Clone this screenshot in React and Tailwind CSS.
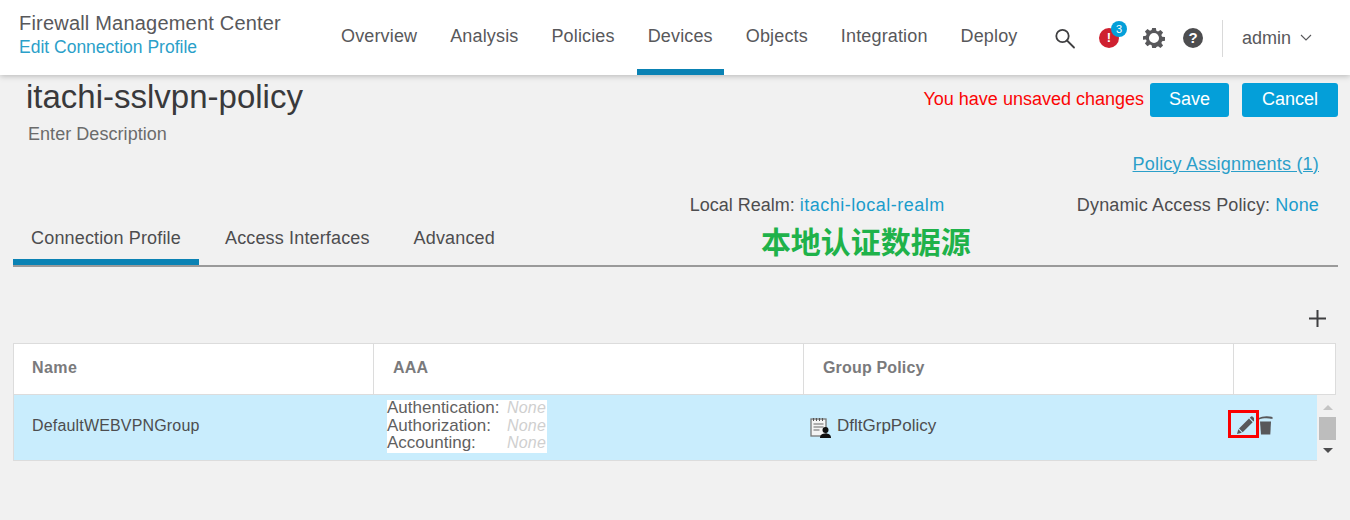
import React from "react";

const F = "[font-family:'Liberation_Sans',Arial,sans-serif]";

function NavItem({ label, active }) {
  return (
    <div className={`h-[75px] px-[11px] flex items-center border-b-[6px] ${active ? "border-[#0a82b4]" : "border-transparent"} `}>
      <span className="text-[18px] tracking-[0.15px] text-[#58585b] pt-[4.5px]">{label}</span>
    </div>
  );
}

export default function App() {
  return (
    <div className={`${F} w-[1350px] h-[520px] overflow-hidden bg-[#f1f1f1] text-[#4d4d4f]`}>
      <header className="h-[75px] bg-white shadow-[0_1px_6px_rgba(0,0,0,0.25)] flex items-start relative z-10">
        <div className="w-[326px] pl-[19px] pt-[10px] shrink-0">
          <div className="text-[20px] leading-[26px] text-[#58585b] tracking-[0.2px]">Firewall Management Center</div>
          <div className="text-[17.5px] leading-[22px] text-[#2b9fc9]">Edit Connection Profile</div>
        </div>
        <nav className="flex gap-[11px] w-[710px] shrink-0 pl-[4px]">
          <NavItem label="Overview" />
          <NavItem label="Analysis" />
          <NavItem label="Policies" />
          <NavItem label="Devices" active />
          <NavItem label="Objects" />
          <NavItem label="Integration" />
          <NavItem label="Deploy" />
        </nav>
        <div className="flex items-center h-[75px] pt-[1px]">
          <svg width="22" height="22" viewBox="0 0 22 22" fill="none" stroke="#3f3f41" strokeWidth="1.8" className="ml-[18px]">
            <circle cx="8.5" cy="9" r="6.2" />
            <path d="M13 13.5l7 7" strokeLinecap="round" />
          </svg>
          <div className="relative ml-[23px] w-[20px] h-[20px] rounded-full bg-[#cf2030] flex items-center justify-center text-white text-[13px] font-bold">
            !
            <span className="absolute -top-[7px] left-[12px] w-[16px] h-[16px] rounded-full bg-[#049fd9] text-white text-[11px] leading-[16px] text-center font-normal">3</span>
          </div>
          <svg width="22" height="22" viewBox="0 0 24 24" className="ml-[24px]" fill="#58585b">
            <path fillRule="evenodd" d="M10 1h4l.6 3.2 1.8.8 2.7-1.8 2.8 2.8-1.9 2.7.8 1.8 3.2.5v4l-3.2.6-.8 1.8 1.9 2.7-2.8 2.8-2.7-1.9-1.8.8L14 23h-4l-.6-3.2-1.8-.8-2.7 1.9-2.8-2.8 1.9-2.7-.8-1.8L0 14v-4l3.2-.5.8-1.8L2.1 5l2.8-2.8L7.6 4l1.8-.8zM12 6.500a5.500 5.500 0 100 11 5.500 5.500 0 000-11z" />
          </svg>
          <div className="ml-[18px] w-[20px] h-[20px] rounded-full bg-[#4d4d4f] flex items-center justify-center text-white text-[15px] font-bold">?</div>
          <div className="ml-[19px] w-px h-[37px] bg-[#d9d9d9]" />
          <span className="ml-[19px] text-[18px] text-[#58585b]">admin</span>
          <svg width="12" height="8" viewBox="0 0 12 8" fill="none" stroke="#58585b" strokeWidth="1.1" className="ml-[9px]">
            <path d="M1 1l5 5 5-5" />
          </svg>
        </div>
      </header>

      <main>
        <div className="flex justify-between items-start pl-[26px] pr-[12px]">
          <div>
            <h1 className="text-[33px] leading-[44px] text-[#39393b]">itachi-sslvpn-policy</h1>
            <div className="text-[18px] leading-[21px] mt-[4.5px] pl-[2px] text-[#6b6b6b] tracking-[0.05px]">Enter Description</div>
          </div>
          <div className="flex items-center pt-[8px]">
            <span className="text-[#fb0505] text-[18px] mr-[6px] -mt-[2px]">You have unsaved changes</span>
            <button className="w-[79px] h-[34px] rounded-[3px] bg-[#049fd9] text-white text-[18px] pb-[2px]">Save</button>
            <button className="w-[96px] h-[34px] rounded-[3px] bg-[#049fd9] text-white text-[18px] pb-[2px] ml-[13px]">Cancel</button>
          </div>
        </div>

        <div className="flex justify-end pr-[31px] mt-[9px]">
          <a className="text-[18px] leading-[21px] text-[#2b9fc9] underline tracking-[0.2px]">Policy Assignments (1)</a>
        </div>

        <div className="flex justify-end pr-[31px] mt-[20px] text-[18px] leading-[21px]">
          <span>Local Realm: <span className="text-[#1b9ccc] tracking-[0.5px]">itachi-local-realm</span></span>
          <span className="ml-[132px] tracking-[0.15px]">Dynamic Access Policy: <span className="text-[#1b9ccc]">None</span></span>
        </div>

        <div className="ml-[13px] mr-[12px] mt-[1px] h-[50px] border-b-[2px] border-[#9a9a9a] flex items-stretch relative tracking-[0.15px]">
          <div className="w-[186px] flex items-center justify-center border-b-[6px] border-[#0a82b4] text-[18px] pt-[2px]">Connection Profile</div>
          <div className="ml-[26px] flex items-center text-[18px] pb-[4px]">Access Interfaces</div>
          <div className="ml-[44px] flex items-center text-[18px] pb-[4px]">Advanced</div>
          <div className="ml-[266px] flex items-center text-[30px] font-bold text-[#1fb24a] [font-family:'Noto_Sans_CJK_SC',sans-serif] tracking-[0px]">本地认证数据源</div>
        </div>

        <div className="flex justify-end pr-[23px] mt-[42px] mb-[15px]">
          <svg width="19" height="19" viewBox="0 0 19 19" stroke="#3f3f41" strokeWidth="2"><path d="M9.5 1v17M1 9.500h17" /></svg>
        </div>

        <div className="ml-[13px] w-[1323px] h-[52px] bg-white border border-[#dcdcdc] grid grid-cols-[360px_430px_430px_1fr] text-[16px] font-bold text-[#7a7a7c] tracking-[0.17px]">
          <div className="flex items-center pl-[18px] pb-[2px] border-r border-[#dcdcdc] tracking-[0.4px]">Name</div>
          <div className="flex items-center pl-[19px] pb-[2px] border-r border-[#dcdcdc]">AAA</div>
          <div className="flex items-center pl-[19px] pb-[2px] border-r border-[#dcdcdc]">Group Policy</div>
          <div />
        </div>

        <div className="ml-[13px] w-[1323px] h-[67px] flex">
          <div className="w-[1304px] h-[66px] bg-[#c9edfd] border-b border-l border-[#dcdcdc] grid grid-cols-[359px_430px_1fr] items-center text-[16px] text-[#4d4d4f]">
            <div className="pl-[18px] tracking-[0.17px] -mt-[2px]">DefaultWEBVPNGroup</div>
            <div className="pl-[14px]">
              <div className="w-[160px] h-[53px] bg-white -mt-[1px]">
                <div className="grid grid-cols-[120px_1fr] text-[17px] leading-[17.5px] text-[#5f5f61] relative -top-[1px]">
                  <span className="whitespace-nowrap">Authentication:</span><i className="text-[#cfcfcf] text-[16px] tracking-[0.2px]">None</i>
                  <span>Authorization:</span><i className="text-[#cfcfcf] text-[16px] tracking-[0.2px]">None</i>
                  <span>Accounting:</span><i className="text-[#cfcfcf] text-[16px] tracking-[0.2px]">None</i>
                </div>
              </div>
            </div>
            <div className="flex items-center justify-between pl-[7px] pr-[44px]">
              <div className="flex items-center">
                <svg width="22" height="22" viewBox="0 0 22 22" className="mr-[5px] mt-[2px]">
                  <rect x="1" y="2" width="15" height="17" fill="#f4f4f4" stroke="#777" strokeWidth="1.3" />
                  <path d="M3.5 1v3M6.5 1v3M9.5 1v3M12.5 1v3" stroke="#555" />
                  <path d="M3.5 7h10M3.5 10h10M3.5 13h6" stroke="#666" strokeWidth="1.2" />
                  <circle cx="15.5" cy="13" r="3" fill="#111" />
                  <path d="M10 21c0-3.500 2.500-4.500 5.500-4.500s5.500 1 5.500 4.500z" fill="#111" />
                </svg>
                <span className="-mt-[2px] text-[17px]">DfltGrpPolicy</span>
              </div>
              <div className="flex items-center -mt-[6px]">
                <span className="w-[31px] h-[28px] border-[3px] border-[#fb0000] flex items-center justify-center -mr-[1px] z-10">
                  <svg width="20" height="20" viewBox="0 0 20 20" fill="#58585a" className="shrink-0">
                    <path d="M3 20l1.300-4.800 3.500 3.500z" />
                    <path d="M5 14.500L15 4.500l3.700 3.700-10 10z" />
                    <path d="M15.800 3.700l.9-.9a1.500 1.500 0 012.100 0l1.600 1.600a1.500 1.500 0 010 2.100l-.9.9z" />
                  </svg>
                </span>
                <svg width="15" height="20" viewBox="0 0 15 20" fill="#58585a" className="mt-[1px]">
                  <path d="M0 3.500C4 .8 10 .6 14.500 2v2C10 3 5 3 0 4.900z" />
                  <path d="M2 6.500h11L12.300 19.500H3z" />
                </svg>
              </div>
            </div>
          </div>
          <div className="w-[19px] h-[66px] flex flex-col items-center pt-[10px] pl-[2px]">
            <div className="w-0 h-0 border-x-[5px] border-x-transparent border-b-[5px] border-b-[#c4c4c4]" />
            <div className="w-[17px] h-[23px] bg-[#bdbdbd] mt-[7px]" />
            <div className="w-0 h-0 border-x-[5px] border-x-transparent border-t-[5px] border-t-[#4d4d4f] mt-[8px]" />
          </div>
        </div>
      </main>
    </div>
  );
}
